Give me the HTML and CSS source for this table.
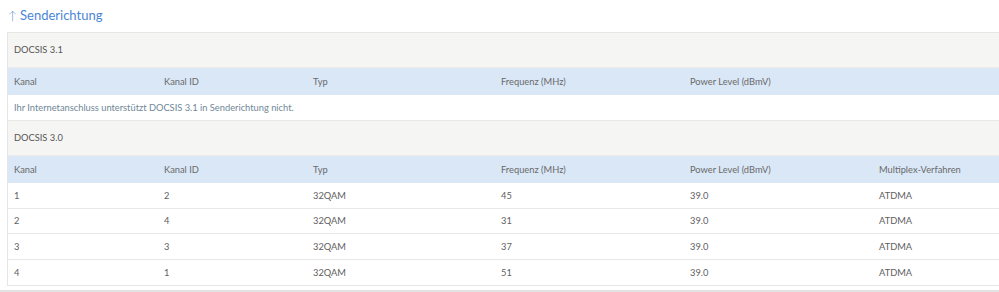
FILE: index.html
```html
<!DOCTYPE html>
<html lang="de">
<head>
<meta charset="utf-8">
<title>Senderichtung</title>
<link rel="stylesheet" href="styles.css">
</head>
<body>
<div class="page">
  <h2 class="title"><span class="arrow">↑</span>Senderichtung</h2>
  <div class="table">
    <div class="group">DOCSIS 3.1</div>
    <div class="row head">
      <div class="c1">Kanal</div><div class="c2">Kanal ID</div><div class="c3">Typ</div><div class="c4">Frequenz (MHz)</div><div class="c5">Power Level (dBmV)</div><div class="c6"></div>
    </div>
    <div class="row msg">Ihr Internetanschluss unterstützt DOCSIS 3.1 in Senderichtung nicht.</div>
    <div class="group">DOCSIS 3.0</div>
    <div class="row head">
      <div class="c1">Kanal</div><div class="c2">Kanal ID</div><div class="c3">Typ</div><div class="c4">Frequenz (MHz)</div><div class="c5">Power Level (dBmV)</div><div class="c6">Multiplex-Verfahren</div>
    </div>
    <div class="row data">
      <div class="c1">1</div><div class="c2">2</div><div class="c3">32QAM</div><div class="c4">45</div><div class="c5">39.0</div><div class="c6">ATDMA</div>
    </div>
    <div class="row data">
      <div class="c1">2</div><div class="c2">4</div><div class="c3">32QAM</div><div class="c4">31</div><div class="c5">39.0</div><div class="c6">ATDMA</div>
    </div>
    <div class="row data">
      <div class="c1">3</div><div class="c2">3</div><div class="c3">32QAM</div><div class="c4">37</div><div class="c5">39.0</div><div class="c6">ATDMA</div>
    </div>
    <div class="row data">
      <div class="c1">4</div><div class="c2">1</div><div class="c3">32QAM</div><div class="c4">51</div><div class="c5">39.0</div><div class="c6">ATDMA</div>
    </div>
  </div>
</div>
<div class="footer-line"></div>
</body>
</html>
```
FILE: styles.css
```css
html, body {
  margin: 0;
  padding: 0;
  background: #ffffff;
  overflow: hidden;
}
body {
  font-family: Lato, "Open Sans", sans-serif;
  color: #555;
  width: 999px;
  height: 292px;
}
.page {
  padding: 0 0 0 7px;
  width: 1010px;
}
.title {
  margin: 0;
  height: 32px;
  padding-top: 5px;
  box-sizing: border-box;
  font-size: 13px;
  font-weight: 400;
  color: #4a86d6;
  line-height: 20px;
}
.arrow {
  display: inline-block;
  font-size: 12px;
  font-weight: 300;
  margin: 0 3px 0 1px;
}
.table {
  border: 1px solid #e6e6e4;
  border-right: none;
  width: 1000px;
  font-size: 9.3px;
}
.group {
  background: #f5f5f3;
  height: 35px;
  line-height: 34px;
  padding-left: 6px;
  color: #555;
  border-bottom: 1px solid #ececea;
  box-sizing: border-box;
}
.row {
  display: flex;
  box-sizing: border-box;
  align-items: center;
}
.row > div {
  padding-left: 6px;
  box-sizing: border-box;
  flex: none;
}
.c1 { width: 150px; }
.c2 { width: 149px; }
.c3 { width: 188px; }
.c4 { width: 189px; }
.c5 { width: 189px; }
.c6 { width: 135px; }
.head {
  background: #d9e7f6;
  height: 27px;
  color: #6a6a6a;
}
.msg {
  height: 26px;
  padding-left: 6px;
  color: #6f8798;
  background: #fff;
  border-bottom: 1px solid #e8e8e6;
}
.data {
  height: 25.5px;
  color: #606060;
  border-bottom: 1px solid #e8e8e6;
}
.data:last-child {
  border-bottom: none;
}
.footer-line {
  margin-top: 4px;
  height: 2px;
  background: #e2e2e2;
  width: 999px;
}
```
